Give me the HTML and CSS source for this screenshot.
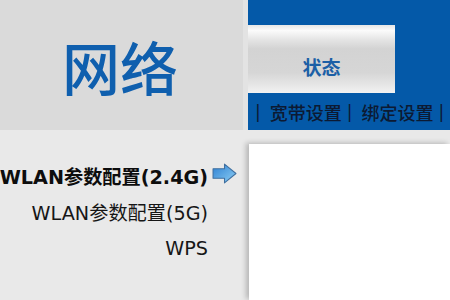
FILE: index.html
```html
<!DOCTYPE html>
<html lang="zh-CN">
<head>
<meta charset="utf-8">
<title>网络</title>
<link rel="stylesheet" href="styles.css">
</head>
<body>
<div class="page">
  <header class="header">
    <div class="logo">网络</div>
    <nav class="nav">
      <div class="tab">状态</div>
      <div class="subnav">
        <span class="sep">|</span><span class="link">宽带设置</span><span class="sep">|</span><span class="link">绑定设置</span><span class="sep">|</span>
      </div>
    </nav>
  </header>
  <main class="main">
    <ul class="menu">
      <li class="item active"><span class="label">WLAN参数配置(2.4G)</span><span class="slot"><svg class="arrow" width="25" height="21" viewBox="0 0 24 20"><defs><linearGradient id="ag" x1="0" y1="0" x2="1" y2="1"><stop offset="0" stop-color="#2c7fd2"/><stop offset="1" stop-color="#8fd0f4"/></linearGradient></defs><path d="M1 5.5 H12 V1 L23 10 L12 19 V14.5 H1 Z" fill="url(#ag)" stroke="#3f6f9f" stroke-width="1" stroke-linejoin="round"/></svg></span></li>
      <li class="item"><span class="label">WLAN参数配置(5G)</span><span class="slot"></span></li>
      <li class="item"><span class="label">WPS</span><span class="slot"></span></li>
    </ul>
    <section class="content"></section>
  </main>
</div>
</body>
</html>
```
FILE: styles.css
```css
html, body {
  margin: 0;
  padding: 0;
}
body {
  width: 450px;
  height: 300px;
  overflow: hidden;
  background: #e9e9e9;
  font-family: "DejaVu Sans", "Noto Sans CJK SC", sans-serif;
}
.page {
  display: flex;
  flex-direction: column;
  height: 300px;
}
.header {
  display: flex;
  height: 130px;
}
.logo {
  width: 248px;
  flex: none;
  box-sizing: border-box;
  background: #dadada;
  border-right: 5px solid #e3e3e3;
  display: flex;
  align-items: center;
  justify-content: center;
  font-family: "Noto Sans CJK SC", sans-serif;
  font-size: 58px;
  font-weight: 500;
  color: #0f5fae;
  padding: 2px 3px 0 0;
}
.nav {
  flex: 1;
  background: #0459a8;
  padding-top: 25px;
  display: flex;
  flex-direction: column;
}
.tab {
  width: 147px;
  height: 68px;
  background: linear-gradient(to bottom, #e6e6e6 0%, #fbfbfb 8%, #e4e4e4 22%, #d3d3d3 35%, #d6d6d6 70%, #e6e6e6 88%, #f2f2f2 100%);
  display: flex;
  align-items: center;
  justify-content: center;
  font-family: "Noto Sans CJK SC", sans-serif;
  font-weight: 700;
  font-size: 19px;
  color: #1c5fa6;
  padding-top: 15px;
  box-sizing: border-box;
}
.subnav {
  height: 37px;
  display: flex;
  align-items: center;
  padding-left: 7px;
  font-family: "Noto Sans CJK SC", sans-serif;
  font-size: 18px;
  font-weight: 500;
  color: #0c1a33;
  white-space: nowrap;
}
.sep {
  font-family: "DejaVu Sans", sans-serif;
  font-size: 17px;
}
.link {
  margin: 0 5px 0 9px;
}
.main {
  display: flex;
  flex: 1;
}
.menu {
  list-style: none;
  margin: 0;
  padding: 28px 0 0 0;
  width: 249px;
  flex: none;
}
.item {
  display: flex;
  justify-content: flex-end;
  align-items: center;
  height: 36px;
  font-size: 19.2px;
  color: #161616;
  white-space: nowrap;
}
.item.active {
  font-weight: 700;
  color: #0d0d0d;
}
.slot {
  width: 41px;
  flex: none;
  display: flex;
  align-items: center;
}
.arrow {
  margin-left: 4px;
  margin-top: -5px;
}
.content {
  flex: 1;
  margin-top: 14px;
  background: #ffffff;
  box-shadow: -3px -1px 5px rgba(0, 0, 0, 0.22);
}
```
